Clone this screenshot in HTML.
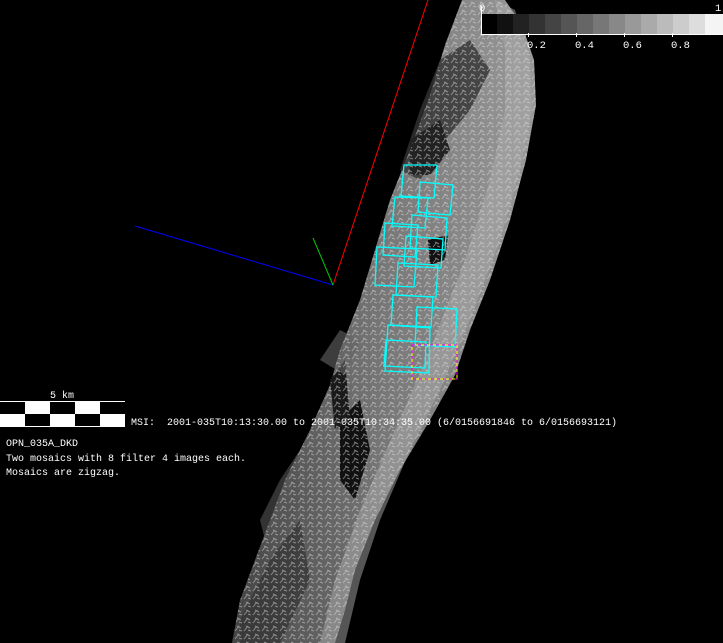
<!DOCTYPE html>
<html><head><meta charset="utf-8"><style>
html,body{margin:0;padding:0;background:#000;}
svg{display:block}
text{font-family:"Liberation Mono",monospace;font-size:10.5px;fill:#fff}
</style></head><body>
<svg width="723" height="643" viewBox="0 0 723 643" xmlns="http://www.w3.org/2000/svg">
<defs>
<linearGradient id="g1" x1="0" y1="0" x2="1" y2="0">
<stop offset="0" stop-color="#444"/><stop offset="0.5" stop-color="#777"/><stop offset="1" stop-color="#999"/>
</linearGradient>
<pattern id="tx" width="9" height="8" patternUnits="userSpaceOnUse">
<path d="M1,7 L5,2 M3,2 L7,4 M5,6 L8,7" stroke="#ddd" stroke-width="1" fill="none" opacity="0.5"/>
</pattern>
</defs>
<rect width="723" height="643" fill="#000"/>
<!-- asteroid body -->
<polygon fill="url(#g1)" points="462,0 505,0 522,25 534,60 536,105 526,160 510,220 490,280 470,330 455,375 430,420 400,470 375,520 355,570 345,610 335,643 232,643 240,600 255,560 270,520 285,480 310,430 330,385 340,350 360,300 375,250 390,200 410,150 430,95 445,45"/>
<polygon fill="#aaa" opacity="0.5" points="495,0 515,10 530,60 532,110 520,170 500,240 470,320 440,390 410,450 380,520 360,580 345,643 320,643 335,580 360,510 395,430 430,350 465,260 490,180 505,110 505,50"/>
<polygon fill="#333" opacity="0.8" points="440,60 470,40 490,70 470,110 445,140 420,180 400,170 420,110"/>
<polygon fill="#222" points="410,140 440,120 450,150 430,175 410,175"/>
<polygon fill="#111" points="428,240 448,235 445,260 430,265"/>
<polygon fill="#111" points="340,420 360,400 370,450 355,500 340,480"/>
<polygon fill="#1a1a1a" points="330,380 345,360 350,420 335,430"/>
<polygon fill="#333" opacity="0.7" points="240,620 270,560 300,520 310,580 280,643 240,643"/>
<polygon fill="#555" opacity="0.6" points="260,520 280,480 300,450 300,500 270,560"/>
<polygon fill="#666" opacity="0.6" points="320,360 340,330 360,340 345,375"/>
<polygon fill="url(#tx)" points="462,0 505,0 522,25 534,60 536,105 526,160 510,220 490,280 470,330 455,375 430,420 400,470 375,520 355,570 345,610 335,643 232,643 240,600 255,560 270,520 285,480 310,430 330,385 340,350 360,300 375,250 390,200 410,150 430,95 445,45"/>
<!-- axes -->
<line x1="333" y1="285" x2="428" y2="0" stroke="#f00" stroke-width="1"/>
<line x1="135" y1="226" x2="333" y2="285" stroke="#00f" stroke-width="1"/>
<line x1="313" y1="238" x2="333" y2="285" stroke="#0c0" stroke-width="1"/>
<!-- footprints -->
<g fill="none" stroke="#0ff" stroke-width="1.3">
<polygon points="404,165 437,165 434,198 401,196"/>
<polygon points="420,182 453,185 450,215 418,212"/>
<polygon points="395,197 428,198 425,228 392,226"/>
<polygon points="412,215 447,218 445,250 410,248"/>
<polygon points="385,223 418,225 415,257 383,255"/>
<polygon points="406,236 443,239 441,268 404,266"/>
<polygon points="377,247 417,249 414,287 375,285"/>
<polygon points="398,263 438,265 436,297 396,295"/>
<polygon points="393,295 433,297 431,327 391,325"/>
<polygon points="417,307 457,309 455,347 415,345"/>
<polygon points="388,325 430,328 429,373 385,371"/>
<polygon points="386,340 426,342 425,368 384,366"/>
</g>
<rect x="412" y="345" width="45" height="34" fill="none" stroke="#f0f" stroke-width="1" stroke-dasharray="3,3"/>
<rect x="412" y="345" width="45" height="34" fill="none" stroke="#ff0" stroke-width="1" stroke-dasharray="3,3" stroke-dashoffset="3"/>
<!-- colorbar -->
<g>
<rect x="481" y="14" width="16" height="20" fill="#000"/>
<rect x="497" y="14" width="16" height="20" fill="#111"/>
<rect x="513" y="14" width="16" height="20" fill="#222"/>
<rect x="529" y="14" width="16" height="20" fill="#333"/>
<rect x="545" y="14" width="16" height="20" fill="#444"/>
<rect x="561" y="14" width="16" height="20" fill="#555"/>
<rect x="577" y="14" width="16" height="20" fill="#666"/>
<rect x="593" y="14" width="16" height="20" fill="#777"/>
<rect x="609" y="14" width="16" height="20" fill="#888"/>
<rect x="625" y="14" width="16" height="20" fill="#999"/>
<rect x="641" y="14" width="16" height="20" fill="#aaa"/>
<rect x="657" y="14" width="16" height="20" fill="#bbb"/>
<rect x="673" y="14" width="16" height="20" fill="#ccc"/>
<rect x="689" y="14" width="16" height="20" fill="#ddd"/>
<rect x="705" y="14" width="18" height="20" fill="#f4f4f4"/>
<line x1="481.5" y1="6" x2="481.5" y2="35" stroke="#fff"/>
<line x1="481" y1="34.5" x2="723" y2="34.5" stroke="#fff"/>
<line x1="528.5" y1="33" x2="528.5" y2="37" stroke="#fff"/>
<line x1="576.5" y1="33" x2="576.5" y2="37" stroke="#fff"/>
<line x1="624.5" y1="33" x2="624.5" y2="37" stroke="#fff"/>
<line x1="672.5" y1="33" x2="672.5" y2="37" stroke="#fff"/>
<text x="479" y="11">0</text>
<text x="715" y="11">1</text>
<text x="527" y="48">0.2</text>
<text x="575" y="48">0.4</text>
<text x="623" y="48">0.6</text>
<text x="671" y="48">0.8</text>
</g>
<!-- scale bar -->
<rect x="0.5" y="401.5" width="124" height="25" fill="#fff" stroke="#fff"/>
<rect x="0" y="402" width="25" height="12" fill="#000"/>
<rect x="50" y="402" width="25" height="12" fill="#000"/>
<rect x="100" y="402" width="25" height="12" fill="#000"/>
<rect x="25" y="414" width="25" height="12" fill="#000"/>
<rect x="75" y="414" width="25" height="12" fill="#000"/>
<text x="50" y="398" textLength="24" lengthAdjust="spacingAndGlyphs">5 km</text>
<text x="131" y="425" xml:space="preserve" textLength="486" lengthAdjust="spacingAndGlyphs">MSI:  2001-035T10:13:30.00 to 2001-035T10:34:35.00 (6/0156691846 to 6/0156693121)</text>
<text x="6" y="446" textLength="72" lengthAdjust="spacingAndGlyphs">OPN_035A_DKD</text>
<text x="6" y="461" textLength="240" lengthAdjust="spacingAndGlyphs">Two mosaics with 8 filter 4 images each.</text>
<text x="6" y="475" textLength="114" lengthAdjust="spacingAndGlyphs">Mosaics are zigzag.</text>
</svg>
</body></html>
